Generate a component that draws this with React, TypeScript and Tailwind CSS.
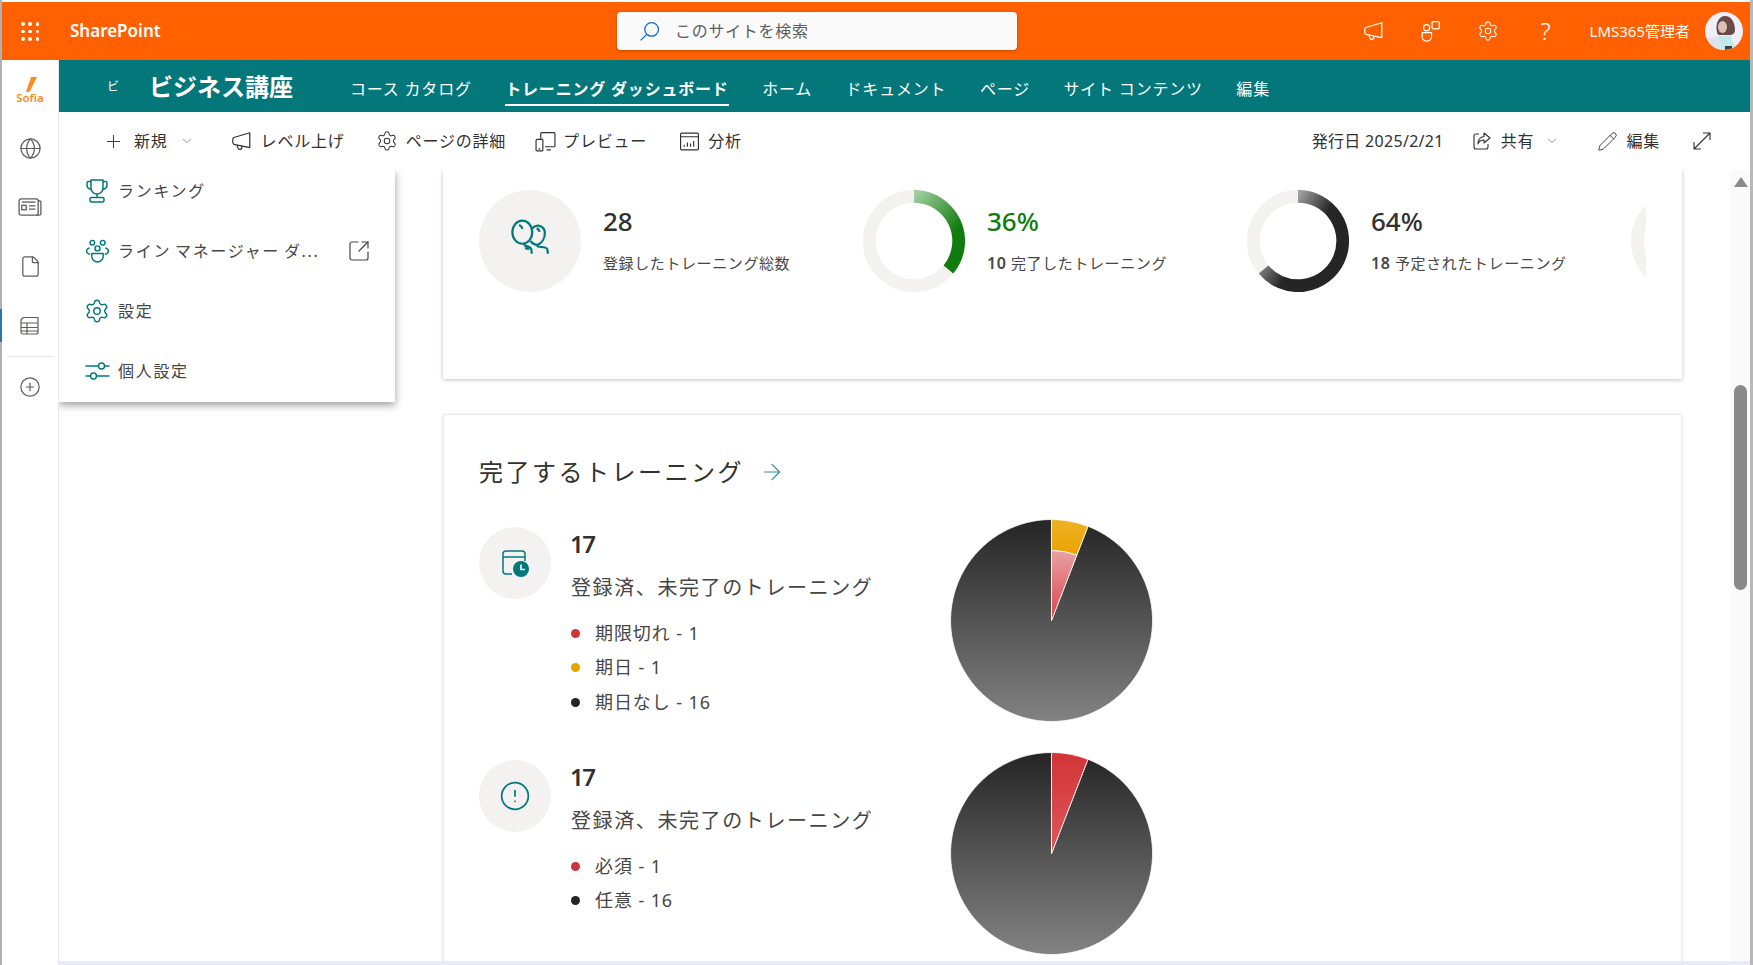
import React from 'react';
import { ChevronDown, Plus, Settings, Pencil, ArrowRight, SquareArrowOutUpRight, Globe, File, CirclePlus, CircleAlert } from 'lucide-react';

const FONT = 'font-["Noto_Sans","Noto_Sans_CJK_JP",sans-serif]';

type IconProps = { className?: string };

const Megaphone = ({ className }: IconProps) => (
    <svg viewBox="0 0 20 20" fill="none" stroke="currentColor" strokeWidth="1.1" className={className}>
        <path d="M18 2.5v13.5L3.5 13a2.5 2.5 0 0 1-1-2V8.500a2 2 0 0 1 1-1.700z" strokeLinejoin="round" />
        <path d="M6.500 13.800l.7 2.500a1.800 1.800 0 0 0 3.500-.9l-.2-.7" />
    </svg>
);

const Persons = ({ className }: IconProps) => (
    <svg viewBox="0 0 20 20" fill="none" stroke="currentColor" strokeWidth="1.1" className={className}>
        <rect x="11" y="1.500" width="6.500" height="6.500" rx="1" />
        <circle cx="6" cy="7" r="2.800" />
        <path d="M2 11.500h8.500v3.500a4 4 0 0 1-8.500 0z" strokeLinejoin="round" />
    </svg>
);

const Preview = ({ className }: IconProps) => (
    <svg viewBox="0 0 20 20" fill="none" stroke="currentColor" strokeWidth="1.1" className={className}>
        <path d="M5.500 8V2.500a1 1 0 0 1 1-1H18a1 1 0 0 1 1 1V14a1 1 0 0 1-1 1H9.500" />
        <rect x="1" y="8" width="6.500" height="11" rx="1" />
        <path d="M3.500 17h1.500M11 18h4" />
    </svg>
);

const Analytics = ({ className }: IconProps) => (
    <svg viewBox="0 0 20 20" fill="none" stroke="currentColor" strokeWidth="1.1" className={className}>
        <rect x="1.500" y="2" width="17" height="16" rx="1" />
        <path d="M1.500 5.500h17M5 15v-2M8 15v-4M11 15v-3M14 15V9.500" />
    </svg>
);

const Share = ({ className }: IconProps) => (
    <svg viewBox="0 0 20 20" fill="none" stroke="currentColor" strokeWidth="1.1" className={className}>
        <path d="M7 3H4a2 2 0 0 0-2 2v11a2 2 0 0 0 2 2h10a2 2 0 0 0 2-2v-3" />
        <path d="M12 2l6 5-6 5V9c-3 0-5 1-6 4 0-4 2-7 6-7.500z" strokeLinejoin="round" />
    </svg>
);

const Expand = ({ className }: IconProps) => (
    <svg viewBox="0 0 20 20" fill="none" stroke="currentColor" strokeWidth="1.1" className={className}>
        <path d="M2 18L18 2M11 2h7v7M2 11v7h7" />
    </svg>
);

const Trophy = ({ className }: IconProps) => (
    <svg viewBox="0 0 24 26" fill="none" stroke="currentColor" strokeWidth="1.500" className={className}>
        <path d="M6 2h12v8a6 6 0 0 1-12 0z" strokeLinejoin="round" />
        <path d="M6 3.500H3.500a1.500 1.500 0 0 0-1.500 1.500v2c0 2.500 2 4 4.400 4.500M18 3.500h2.500A1.500 1.500 0 0 1 22 5v2c0 2.500-2 4-4.400 4.500M12 16v3" />
        <rect x="5" y="19.500" width="14" height="4.500" rx="1.500" />
    </svg>
);

const Team = ({ className }: IconProps) => (
    <svg viewBox="0 0 24 24" fill="none" stroke="currentColor" strokeWidth="1.400" className={className}>
        <circle cx="7" cy="3.500" r="2.200" />
        <circle cx="17" cy="3.500" r="2.200" />
        <circle cx="12" cy="9" r="2.400" />
        <path d="M4.500 8.500C2.500 9 1.500 10 1.500 11.500c0 1.500 1.500 2.800 3.500 3.200M19.500 8.500c2 .5 3 1.500 3 3 0 1.500-1.500 2.800-3.500 3.200" />
        <path d="M6.500 14h11v2.500a5.500 5.500 0 0 1-11 0z" strokeLinejoin="round" />
    </svg>
);

const Sliders = ({ className }: IconProps) => (
    <svg viewBox="0 0 24 20" fill="none" stroke="currentColor" strokeWidth="1.400" className={className}>
        <path d="M0 5h13M19 5h5M0 15h5M11 15h13" />
        <circle cx="16" cy="5" r="3" />
        <circle cx="8" cy="15" r="3" />
    </svg>
);

const TableIcon = ({ className }: IconProps) => (
    <svg viewBox="0 0 20 20" fill="none" stroke="currentColor" strokeWidth="1.200" className={className}>
        <path d="M4 1.500h14v14.500a2 2 0 0 1-2 2H3a2 2 0 0 1-2-2V5a3.500 3.500 0 0 1 3-3.500z" strokeLinejoin="round" />
        <path d="M1 7h17M1 11.500h17M1 15h17M7 7v11" />
    </svg>
);

const News = ({ className }: IconProps) => (
    <svg viewBox="0 0 22 18" fill="none" stroke="currentColor" strokeWidth="1.200" className={className}>
        <rect x="1" y="1.500" width="17.500" height="15" rx="2" />
        <path d="M18.500 3.500h1.500a1 1 0 0 1 1 1V15a1.500 1.500 0 0 1-1.500 1.500H17" />
        <path d="M3.500 4.500h12.500" />
        <rect x="3.500" y="7.500" width="4" height="4" />
        <path d="M10 8h6M10 11h6" />
    </svg>
);

const Balloons = ({ className }: IconProps) => (
    <svg viewBox="0 0 36 40" fill="none" stroke="currentColor" strokeWidth="2" className={className}>
        <ellipse cx="11" cy="12" rx="9" ry="10.500" />
        <path d="M20 8.500C25 3.500 31.500 7 31.500 13c0 5-3 9-6.500 10.500-2.500 0-5-1.500-6.500-3.500" />
        <path d="M8 5.500c1.500.5 2.700 2 3 3.500M24 8.500c1.500.5 2.500 2 2.700 3.200" />
        <path d="M13 22.500c-1 3 5 1.500 6 4.500 .5 1.500 .5 2.500 .5 4.500M25 23.500c-2 3 7 1 8.500 3.500 .7 1.500 .7 2.500 .7 4.500M13.500 27c2-1 3 0 3.500 1" />
    </svg>
);

const CalendarClock = ({ className }: IconProps) => (
    <svg viewBox="0 0 28 28" fill="none" className={className}>
        <path d="M11 25H5a3 3 0 0 1-3-3V5a3 3 0 0 1 3-3h16a3 3 0 0 1 3 3v7M2 8h22" stroke="currentColor" strokeWidth="1.500" />
        <circle cx="20" cy="20" r="8" fill="currentColor" />
        <path d="M20 15.500V20.500H24" stroke="#f3f2f1" strokeWidth="1.700" fill="none" />
    </svg>
);

const Waffle = () => (
    <div className="grid h-[18px] w-[18px] grid-cols-3 gap-[4px]">
        {Array.from({ length: 9 }).map((_, i) => (
            <span key={i} className="h-[3.500px] w-[3.500px] rounded-full bg-white" />
        ))}
    </div>
);

const Avatar = () => (
    <svg viewBox="0 0 38 38" className="h-[38px] w-[38px] rounded-full">
        <rect width="38" height="38" fill="#f0eef8" />
        <path d="M12 20c-2-9 2-16 8-16s10 6 10 14c0 3-2 5-6 5H15c-2 0-3-1-3-3z" fill="#6a4a46" />
        <ellipse cx="17.500" cy="15" rx="4.500" ry="6" fill="#dcc0b6" />
        <path d="M14 23c3 1.500 8 1.500 11 0l6 15H9z" fill="#bfe9ea" />
        <path d="M3 25h11l3 13H6z" fill="#dfe3f0" />
        <rect x="20" y="34" width="7" height="4" fill="#3a4046" />
    </svg>
);

const Logo = () => (
    <div className="flex flex-col items-center">
        <svg viewBox="0 0 14 15" className="h-[15px] w-[14px]">
            <path d="M8 0H14L6.500 15H3z" fill="#ff8a1e" />
        </svg>
        <span className="text-[11.500px] leading-[11px] font-semibold text-[#ff8a1e]">Sofia</span>
    </div>
);

const Donut = ({ end, large, id, from, to, x2, y2 }: { end: string; large: number; id: string; from: string; to: string; x2: number; y2: number }) => (
    <svg viewBox="0 0 102 102" className="h-[102px] w-[102px] shrink-0">
        <defs>
            <linearGradient id={id} gradientUnits="userSpaceOnUse" x1="51" y1="5" x2={x2} y2={y2}>
                <stop offset="0" stopColor={from} />
                <stop offset="1" stopColor={to} />
            </linearGradient>
        </defs>
        <circle cx="51" cy="51" r="44.700" fill="none" stroke="#f3f2f1" strokeWidth="12.700" />
        <path d={`M51 6.300A44.700 44.700 0 ${large} 1 ${end}`} fill="none" stroke={`url(#${id})`} strokeWidth="12.700" />
    </svg>
);

const Pie = ({ id, inner }: { id: string; inner: boolean }) => (
    <svg viewBox="-101.500 -101.500 203 203" className="h-[203px] w-[203px] shrink-0">
        <defs>
            <linearGradient id={`${id}-dark`} x1="0" y1="0" x2="0" y2="1">
                <stop offset="0" stopColor="#252525" />
                <stop offset="1" stopColor="#828282" />
            </linearGradient>
            <linearGradient id={`${id}-red`} x1="0" y1="0" x2="0" y2="1">
                <stop offset="0" stopColor="#d13438" />
                <stop offset="1" stopColor="#e0575b" />
            </linearGradient>
            <linearGradient id={`${id}-pink`} x1="0" y1="0" x2="0" y2="1">
                <stop offset="0" stopColor="#e8a2a4" />
                <stop offset="1" stopColor="#d9444a" />
            </linearGradient>
            <linearGradient id={`${id}-amber`} x1="0" y1="0" x2="0" y2="1">
                <stop offset="0" stopColor="#eeb225" />
                <stop offset="1" stopColor="#eaa300" />
            </linearGradient>
        </defs>
        <path d="M0 0L36.500-94.200A101 101 0 1 1 0-101z" fill={`url(#${id}-dark)`} stroke="#fff" strokeWidth="0.800" />
        {inner ? (
            <>
                <path d="M0-101A101 101 0 0 1 36.500-94.200L25.300-65.300A70 70 0 0 0 0-70z" fill={`url(#${id}-amber)`} stroke="#fff" strokeWidth="0.800" />
                <path d="M0 0L25.300-65.300A70 70 0 0 0 0-70z" fill={`url(#${id}-pink)`} stroke="#fff" strokeWidth="0.800" />
            </>
        ) : (
            <path d="M0 0L36.500-94.200A101 101 0 0 0 0-101z" fill={`url(#${id}-red)`} stroke="#fff" strokeWidth="0.800" />
        )}
    </svg>
);

const NAV = ['コース カタログ', 'トレーニング ダッシュボード', 'ホーム', 'ドキュメント', 'ページ', 'サイト コンテンツ', '編集'];

const MENU = [
    { label: 'ランキング', icon: <Trophy className="h-[26px] w-[24px]" /> },
    { label: 'ライン マネージャー ダ...', icon: <Team className="h-[25px] w-[25px]" />, external: true },
    { label: '設定', icon: <Settings className="h-[26px] w-[26px]" strokeWidth={1.3} /> },
    { label: '個人設定', icon: <Sliders className="h-[20px] w-[25px]" /> },
];

const LegendRow = ({ color, label }: { color: string; label: string }) => (
    <div className="flex h-[34.500px] items-center gap-[15px] text-[18px] text-[#484644]">
        <span className={`h-[9px] w-[9px] rounded-full ${color}`} />
        <span className="tracking-[0.9px]">{label}</span>
    </div>
);

const TrainingRow = ({ icon, legend, pie }: { icon: React.ReactNode; legend: { color: string; label: string }[]; pie: React.ReactNode }) => (
    <div className="flex h-[233px] shrink-0">
        <div className="mt-[8px] flex h-[72px] w-[72px] shrink-0 items-center justify-center rounded-full bg-[#f3f2f1] text-[#03787c]">
            {icon}
        </div>
        <div className="ml-[20px] w-[379px] shrink-0 pt-[9px]">
            <div className="-ml-[1px] text-[24px] leading-[32px] font-semibold tracking-[-1.5px] text-[#323130]">17</div>
            <div className="mt-[13px] text-[20px] leading-[30px] tracking-[1.6px] text-[#484644]">登録済、未完了のトレーニング</div>
            <div className="mt-[13px]">
                {legend.map((l) => (
                    <LegendRow key={l.label} color={l.color} label={l.label} />
                ))}
            </div>
        </div>
        <div className="-mt-[0.5px]">{pie}</div>
    </div>
);

const Stat = ({ graphic, value, valueClass, label }: { graphic: React.ReactNode; value: string; valueClass: string; label: React.ReactNode }) => (
    <div className="flex w-[384px] shrink-0 items-start">
        {graphic}
        <div className="ml-[22px]">
            <div className={`mt-[14px] text-[26px] leading-[34px] font-medium ${valueClass}`}>{value}</div>
            <div className="mt-[13px] text-[15px] leading-[24px] tracking-[0.6px] text-[#484644]">{label}</div>
        </div>
    </div>
);

export default function App() {
    return (
        <div className={`flex h-[965px] w-[1753px] overflow-hidden bg-white ${FONT}`}>
            {/* left window edge */}
            <div className="flex w-[2px] shrink-0 flex-col bg-[#b0b0b0]">
                <div className="mt-[309px] h-[33px] bg-[#2f75a8]" />
            </div>

            <div className="flex min-w-0 flex-1 flex-col">
                <div className="h-[2px] shrink-0 bg-white" />

                {/* suite bar */}
                <header className="flex h-[58px] shrink-0 items-center bg-[#ff6000] text-white">
                    <div className="flex w-[615px] shrink-0 items-center pl-[19px]">
                        <Waffle />
                        <span className="ml-[31px] text-[17px] font-semibold">SharePoint</span>
                    </div>
                    <div className="flex h-[38px] w-[400px] shrink-0 items-center rounded-[4px] bg-[#fafafa] pl-[22px] shadow-[0_1px_3px_rgba(0,0,0,0.25)]">
                        <svg viewBox="0 0 20 20" fill="none" stroke="#0f6cbd" strokeWidth="1.200" className="h-[21px] w-[21px]">
                            <circle cx="12" cy="8" r="6.500" />
                            <path d="M7.500 12.500L1.500 18.500" />
                        </svg>
                        <span className="ml-[15px] text-[16px] tracking-[0.7px] text-[#605e5c]">このサイトを検索</span>
                    </div>
                    <div className="flex flex-1 items-center justify-end pr-[7px]">
                        <Megaphone className="h-[22px] w-[22px]" />
                        <Persons className="ml-[36px] h-[22px] w-[22px]" />
                        <Settings className="ml-[35px] h-[22px] w-[22px]" strokeWidth={1.2} />
                        <span className="ml-[37px] flex w-[20px] justify-center text-[24px] leading-none font-light">?</span>
                        <span className="ml-[34px] text-[15px]">LMS365管理者</span>
                        <span className="ml-[15px] flex"><Avatar /></span>
                    </div>
                </header>

                <div className="flex min-h-0 flex-1">
                    {/* app bar */}
                    <aside className="flex w-[57px] shrink-0 flex-col items-center border-r border-[#e6e6e6] text-[#605e5c]">
                        <div className="mt-[17px]"><Logo /></div>
                        <Globe className="mt-[34px] h-[23px] w-[23px]" strokeWidth={1.3} />
                        <News className="mt-[37px] h-[20px] w-[24px]" />
                        <File className="mt-[38px] h-[23px] w-[23px]" strokeWidth={1.3} />
                        <TableIcon className="mt-[38px] h-[20px] w-[20px]" />
                        <div className="mt-[20px] h-px w-[47px] bg-[#e6e6e6]" />
                        <CirclePlus className="mt-[19px] h-[22px] w-[22px]" strokeWidth={1.3} />
                    </aside>

                    <div className="flex min-w-0 flex-1 flex-col">
                        {/* site header */}
                        <div className="flex h-[52px] shrink-0 bg-[#04777b] text-white">
                            <span className="mt-[18px] ml-[48px] w-[42px] text-[12px] leading-[18px]">ビ</span>
                            <span className="mt-[9px] w-[201px] text-[24px] leading-[36px] font-bold">ビジネス講座</span>
                            <nav className="mt-[14px] flex gap-[33.500px]">
                                {NAV.map((item, i) => (
                                    <span
                                        key={item}
                                        className={`h-[32px] border-b-2 text-[16px] leading-[30px] tracking-[0.8px] ${i === 1 ? 'border-white font-bold' : 'border-transparent'}`}
                                    >
                                        {item}
                                    </span>
                                ))}
                            </nav>
                        </div>

                        {/* command bar */}
                        <div className="flex h-[58px] shrink-0 items-center pr-[38px] pl-[44px] text-[16px] tracking-[0.8px] text-[#323130]">
                            <Plus className="h-[21px] w-[21px]" strokeWidth={1.1} />
                            <span className="ml-[10px]">新規</span>
                            <ChevronDown className="ml-[12px] h-[14px] w-[14px] text-[#605e5c]" strokeWidth={1.2} />
                            <Megaphone className="ml-[36px] h-[22px] w-[22px]" />
                            <span className="ml-[9px]">レベル上げ</span>
                            <Settings className="ml-[31px] h-[22px] w-[22px]" strokeWidth={1.1} />
                            <span className="ml-[8px]">ページの詳細</span>
                            <Preview className="ml-[29px] h-[21px] w-[21px]" />
                            <span className="ml-[7px]">プレビュー</span>
                            <Analytics className="ml-[32px] h-[21px] w-[21px]" />
                            <span className="ml-[8px]">分析</span>
                            <span className="ml-auto tracking-[0.3px]">発行日 2025/2/21</span>
                            <Share className="ml-[28px] h-[20px] w-[20px]" />
                            <span className="ml-[9px]">共有</span>
                            <ChevronDown className="ml-[11px] h-[14px] w-[14px] text-[#605e5c]" strokeWidth={1.2} />
                            <Pencil className="ml-[38px] h-[21px] w-[21px]" strokeWidth={1.05} />
                            <span className="ml-[8px]">編集</span>
                            <Expand className="ml-[32px] h-[20px] w-[20px]" />
                        </div>

                        {/* scrolled page */}
                        <div className="relative flex min-h-0 flex-1">
                            <div className="relative min-w-0 flex-1 overflow-hidden pl-[384px]">
                                <div className="h-[209px] w-[1239px] bg-white pt-[20px] pl-[36px] shadow-[0_1px_4px_rgba(0,0,0,0.25)]">
                                    <div className="flex w-[1167px] overflow-hidden">
                                        <Stat
                                            graphic={
                                                <div className="flex h-[102px] w-[102px] shrink-0 items-center justify-center rounded-full bg-[#f3f2f1] text-[#03787c]">
                                                    <Balloons className="h-[44px] w-[40px]" />
                                                </div>
                                            }
                                            value="28"
                                            valueClass="text-[#323130]"
                                            label="登録したトレーニング総数"
                                        />
                                        <Stat
                                            graphic={<Donut id="green" large={0} end="85.400 79.500" from="#a2cfa2" to="#107c10" x2={92} y2={42} />}
                                            value="36%"
                                            valueClass="text-[#107c10]"
                                            label={<><b className="text-[16px] font-semibold">10</b> 完了したトレーニング</>}
                                        />
                                        <Stat
                                            graphic={<Donut id="black" large={1} end="16.600 79.500" from="#a0a0a0" to="#252525" x2={80} y2={24} />}
                                            value="64%"
                                            valueClass="text-[#323130]"
                                            label={<><b className="text-[16px] font-semibold">18</b> 予定されたトレーニング</>}
                                        />
                                        <div className="h-[102px] w-[102px] shrink-0 rounded-full border-[13px] border-[#f3f2f1]" />
                                    </div>
                                </div>

                                <div className="mt-[35px] h-[560px] w-[1239px] border border-[#ececec] bg-white pt-[39px] pl-[35px] shadow-[0_1px_4px_rgba(0,0,0,0.12)]">
                                    <div className="mb-[29px] flex h-[36px] items-center">
                                        <span className="text-[24px] tracking-[2.500px] text-[#323130]">完了するトレーニング</span>
                                        <ArrowRight className="ml-[15px] h-[26px] w-[26px] text-[#2a9296]" strokeWidth={1.1} />
                                    </div>
                                    <TrainingRow
                                        icon={<CalendarClock className="h-[28px] w-[28px]" />}
                                        legend={[
                                            { color: 'bg-[#d13438]', label: '期限切れ - 1' },
                                            { color: 'bg-[#eaa300]', label: '期日 - 1' },
                                            { color: 'bg-[#252525]', label: '期日なし - 16' },
                                        ]}
                                        pie={<Pie id="pie-a" inner />}
                                    />
                                    <TrainingRow
                                        icon={<CircleAlert className="h-[32px] w-[32px]" strokeWidth={1.3} />}
                                        legend={[
                                            { color: 'bg-[#d13438]', label: '必須 - 1' },
                                            { color: 'bg-[#252525]', label: '任意 - 16' },
                                        ]}
                                        pie={<Pie id="pie-b" inner={false} />}
                                    />
                                </div>

                                {/* flyout menu, open over the page */}
                                <div className="absolute top-0 left-0 h-[232px] w-[336px] overflow-hidden bg-white shadow-[0_3px_8px_rgba(0,0,0,0.4)]">
                                    <ul className="-mt-[9px] pl-[25px] text-[16px] tracking-[1.700px] [word-spacing:-2px] text-[#484644]">
                                        {MENU.map((m) => (
                                            <li key={m.label} className="flex h-[60px] items-center">
                                                <span className="flex w-[26px] justify-center text-[#03787c]">{m.icon}</span>
                                                <span className="ml-[8px] w-[229px] whitespace-nowrap">{m.label}</span>
                                                {m.external && <SquareArrowOutUpRight className="h-[24px] w-[24px]" strokeWidth={1.2} />}
                                            </li>
                                        ))}
                                    </ul>
                                </div>
                            </div>

                            {/* scrollbar */}
                            <div className="flex w-[19px] shrink-0 flex-col items-center bg-[#fafafa]">
                                <div className="mt-[7px] h-0 w-0 border-x-[7px] border-b-[10px] border-x-transparent border-b-[#8a8a8a]" />
                                <div className="mt-[198px] h-[205px] w-[13px] rounded-full bg-[#8a8a8a]" />
                            </div>
                        </div>

                        <div className="h-[4px] shrink-0 bg-[#e8ecfa]" />
                    </div>
                </div>
            </div>

            {/* right window edge */}
            <div className="w-[3px] shrink-0 bg-[#b8b8b8]" />
        </div>
    );
}
